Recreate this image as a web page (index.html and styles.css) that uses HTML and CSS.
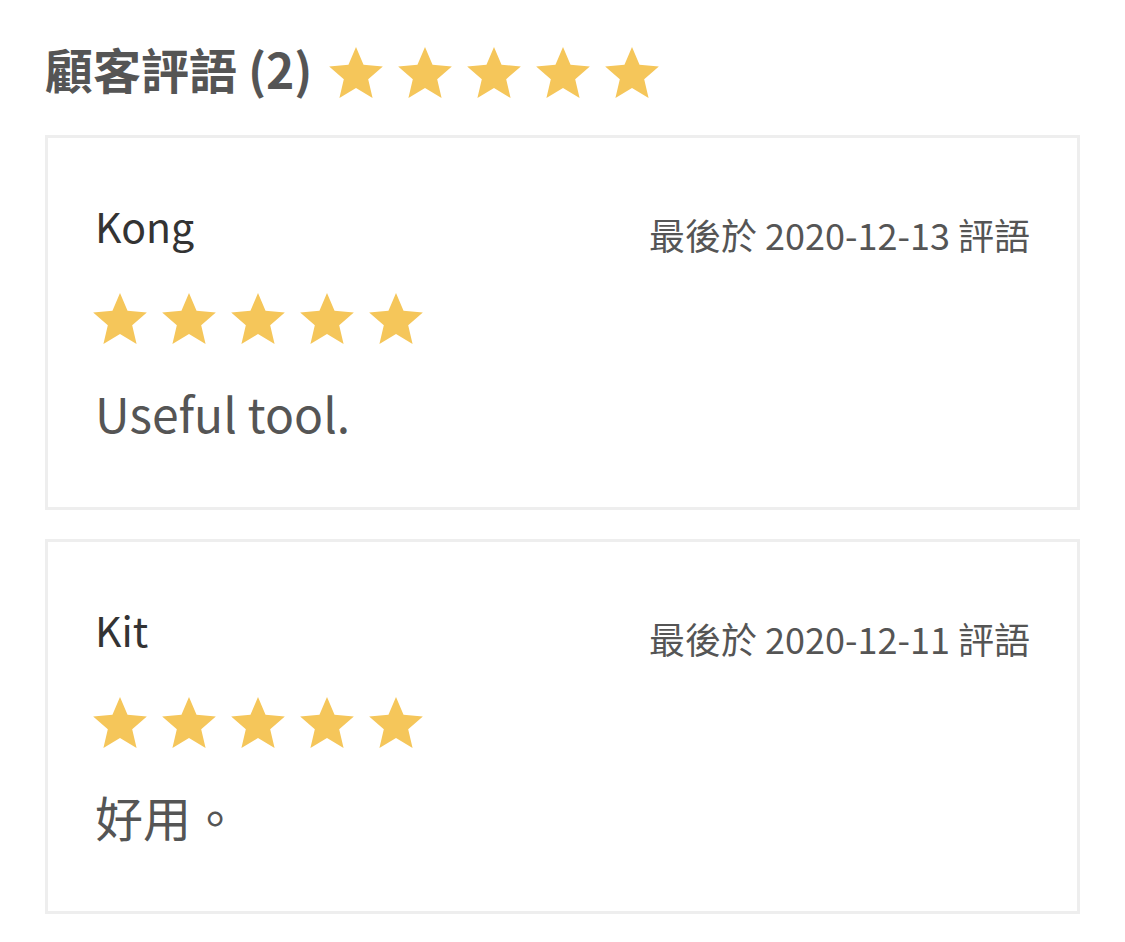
FILE: index.html
```html
<!DOCTYPE html>
<html lang="zh-Hant">
<head>
<meta charset="utf-8">
<link rel="stylesheet" href="styles.css">
</head>
<body>
<svg width="0" height="0" class="defs" aria-hidden="true">
  <defs>
    <symbol id="star" viewBox="2 2 20 19">
      <path d="M12 17.27L18.18 21l-1.64-7.03L22 9.24l-7.19-.61L12 2 9.19 8.63 2 9.24l5.46 4.73L5.82 21z"/>
    </symbol>
  </defs>
</svg>
<main class="reviews">
  <h1 class="title">
    <span class="title-text">顧客評語 (2)</span>
    <span class="stars stars-head">
      <svg class="star"><use href="#star"/></svg>
      <svg class="star"><use href="#star"/></svg>
      <svg class="star"><use href="#star"/></svg>
      <svg class="star"><use href="#star"/></svg>
      <svg class="star"><use href="#star"/></svg>
    </span>
  </h1>

  <section class="card">
    <div class="card-head">
      <span class="name">Kong</span>
      <span class="date">最後於 2020-12-13 評語</span>
    </div>
    <div class="stars">
      <svg class="star"><use href="#star"/></svg>
      <svg class="star"><use href="#star"/></svg>
      <svg class="star"><use href="#star"/></svg>
      <svg class="star"><use href="#star"/></svg>
      <svg class="star"><use href="#star"/></svg>
    </div>
    <p class="comment">Useful tool.</p>
  </section>

  <section class="card">
    <div class="card-head">
      <span class="name">Kit</span>
      <span class="date">最後於 2020-12-11 評語</span>
    </div>
    <div class="stars">
      <svg class="star"><use href="#star"/></svg>
      <svg class="star"><use href="#star"/></svg>
      <svg class="star"><use href="#star"/></svg>
      <svg class="star"><use href="#star"/></svg>
      <svg class="star"><use href="#star"/></svg>
    </div>
    <p class="comment">好用。</p>
  </section>
</main>
</body>
</html>
```
FILE: styles.css
```css
html, body {
  margin: 0;
  padding: 0;
  background: #fff;
}
body {
  font-family: "Noto Sans CJK TC", "Noto Sans", sans-serif;
}
.defs {
  position: absolute;
  width: 0;
  height: 0;
}
.reviews {
  padding: 38px 45px 0 45px;
  display: flex;
  flex-direction: column;
}
.title {
  margin: 0 0 37px 0;
  display: flex;
  align-items: center;
  gap: 16px;
  font-size: 48px;
  font-weight: 700;
  color: #555;
  line-height: 60px;
  height: 60px;
}
.stars {
  display: flex;
  gap: 15px;
}
.stars-head {
  margin-top: 8px;
}
.star {
  width: 54px;
  height: 51px;
  fill: #f5c65a;
}
.card {
  border: 3px solid #eeeeee;
  padding: 62px 47px 65px 47px;
  margin-bottom: 29px;
  display: flex;
  flex-direction: column;
}
.card-head {
  display: flex;
  justify-content: space-between;
  align-items: flex-start;
}
.name {
  font-size: 41px;
  color: #333;
  line-height: 50px;
}
.date {
  font-size: 36px;
  line-height: 50px;
  margin-top: 9px;
  color: #555;
}
.card .stars {
  margin-top: 34px;
  margin-left: -2px;
}
.comment {
  margin: 38px 0 0 0;
  font-size: 48px;
  line-height: 60px;
  color: #555;
}
```
